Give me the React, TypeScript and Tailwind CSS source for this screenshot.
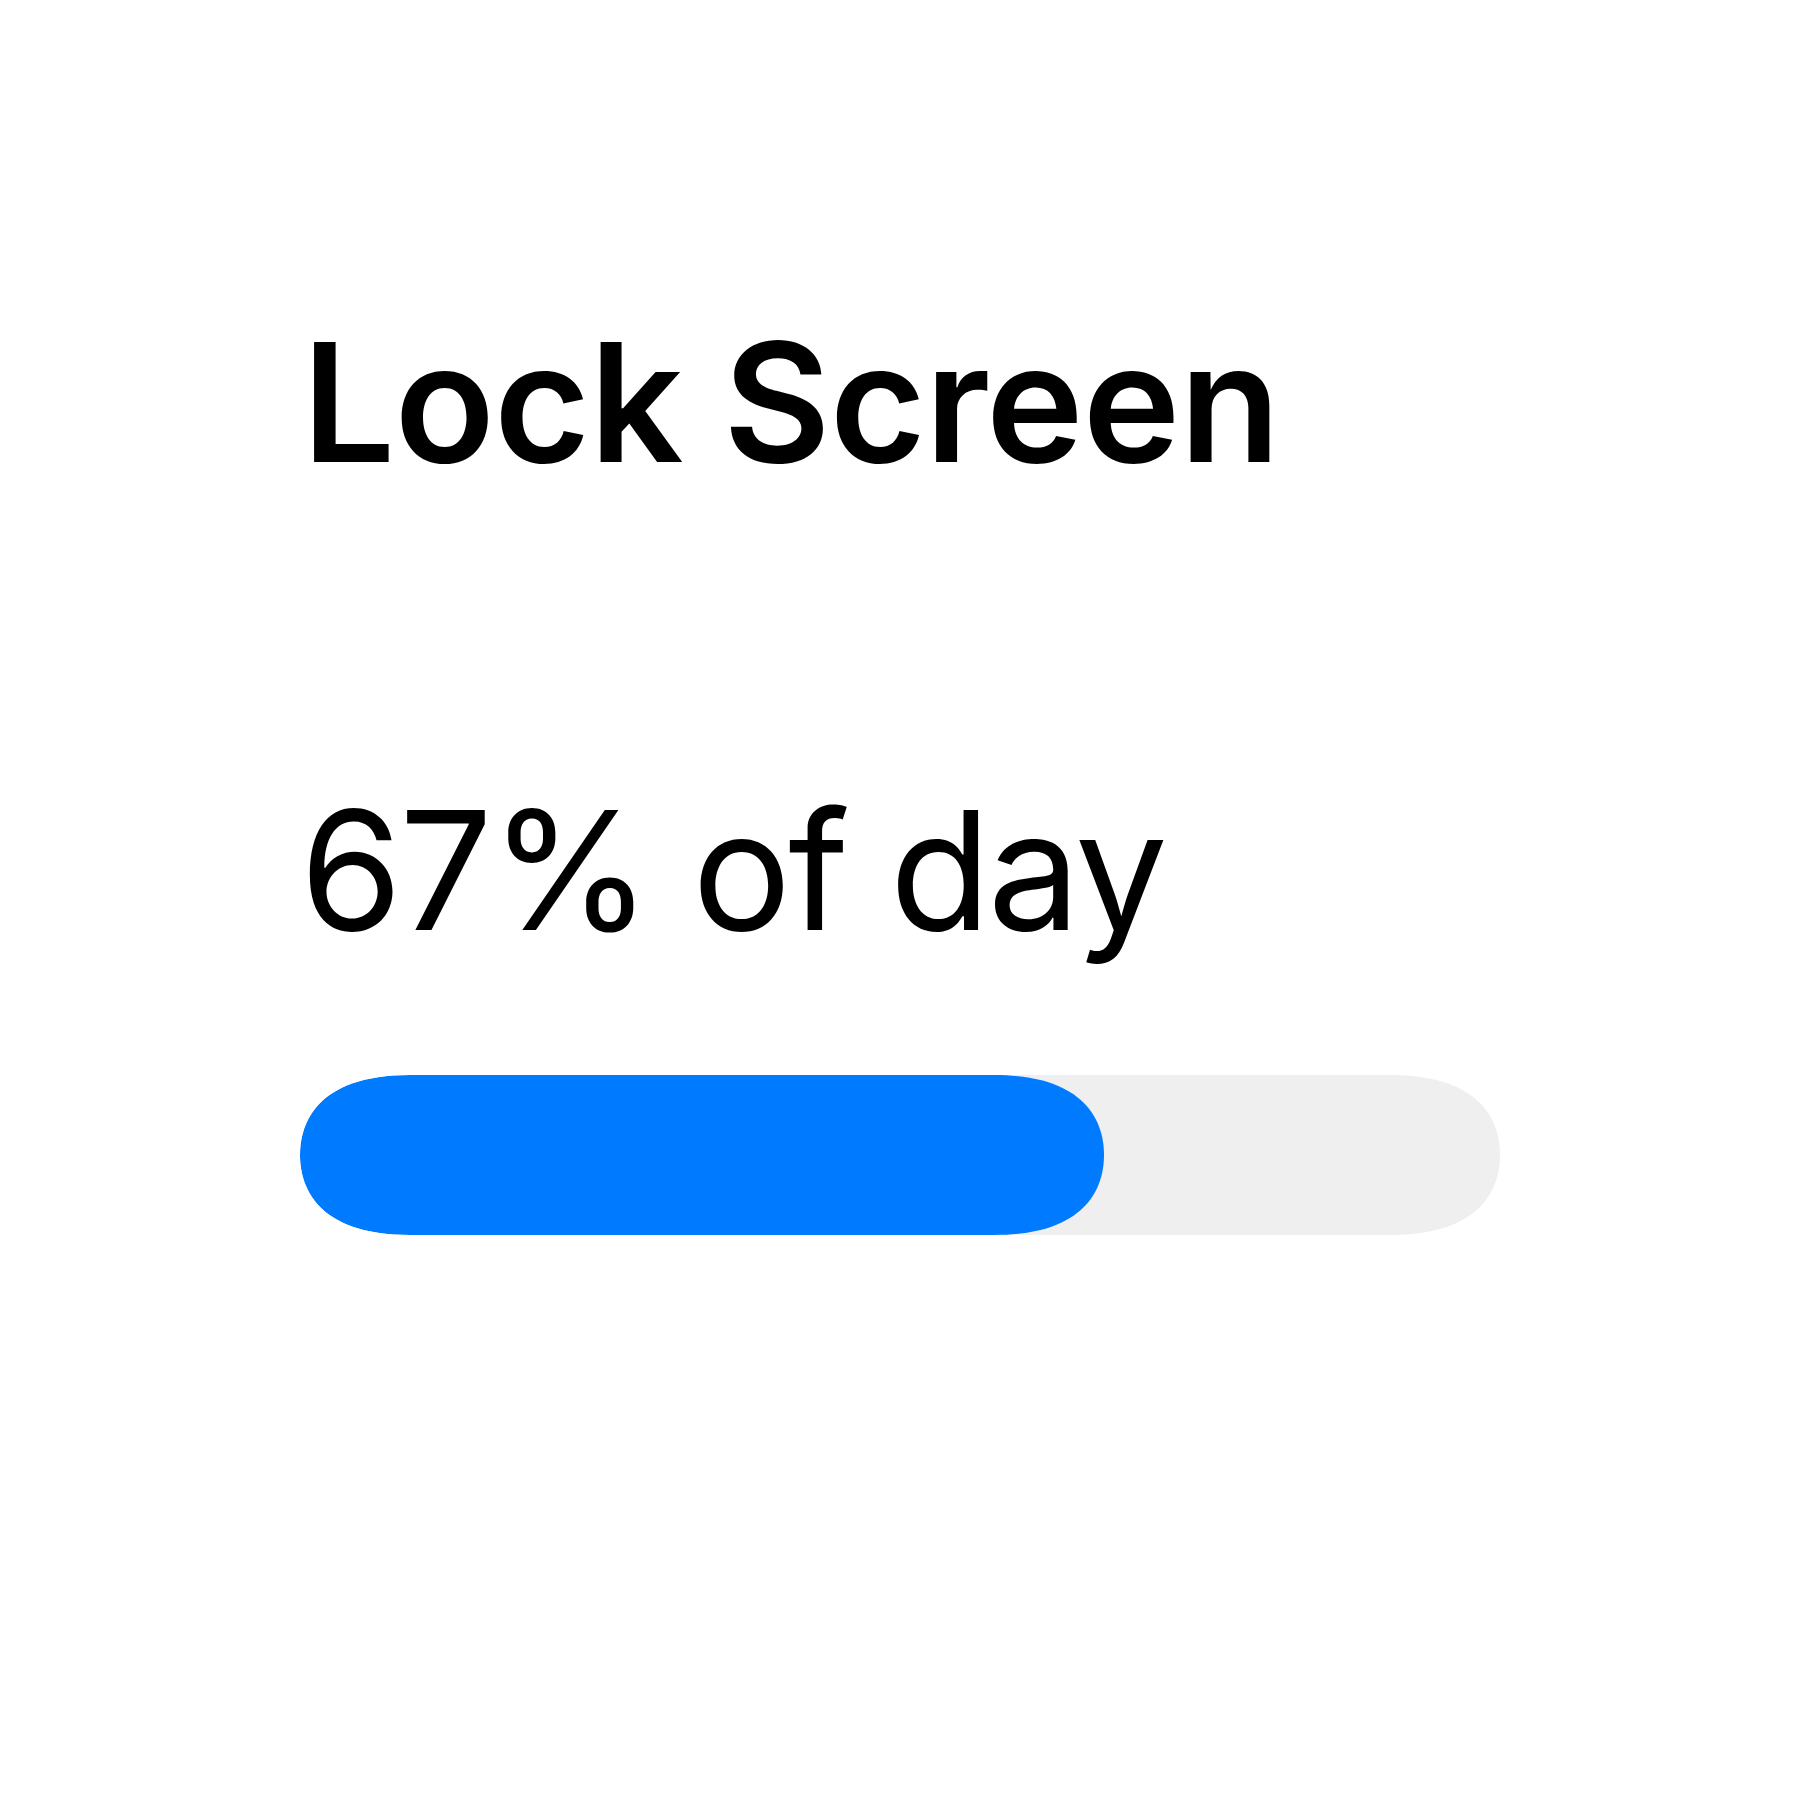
import React from "react";

function capsulePath(w: number, h: number) {
  const r = 110;
  const m = h / 2;
  const a = 30;
  const c = 15;
  return `path('M ${r} 0 L ${w - r} 0 C ${w - c} 0, ${w} ${m - a}, ${w} ${m} C ${w} ${m + a}, ${w - c} ${h}, ${w - r} ${h} L ${r} ${h} C ${c} ${h}, 0 ${m + a}, 0 ${m} C 0 ${m - a}, ${c} 0, ${r} 0 Z')`;
}

export default function App() {
  const pct = 67;
  const trackW = 1200;
  const barH = 160;
  const fillW = Math.round((trackW * pct) / 100);
  return (
    <div className="w-[1800px] h-[1800px] bg-white text-black pl-[300px] pt-[320px] font-['Inter','Noto_Sans',sans-serif]">
      <h1 className="ml-[2px] text-[165px] leading-none font-semibold tracking-[-0.005em]">Lock Screen</h1>
      <p className="mt-[303px] text-[165px] leading-none font-normal tracking-[-0.018em]">{pct}% of day</p>
      <div
        className="mt-[122px] w-[1200px] h-[160px] bg-[#efefef] flex"
        style={{ clipPath: capsulePath(trackW, barH) }}
      >
        <div
          className="h-full bg-[#007aff]"
          style={{ width: `${fillW}px`, clipPath: capsulePath(fillW, barH) }}
        />
      </div>
    </div>
  );
}
